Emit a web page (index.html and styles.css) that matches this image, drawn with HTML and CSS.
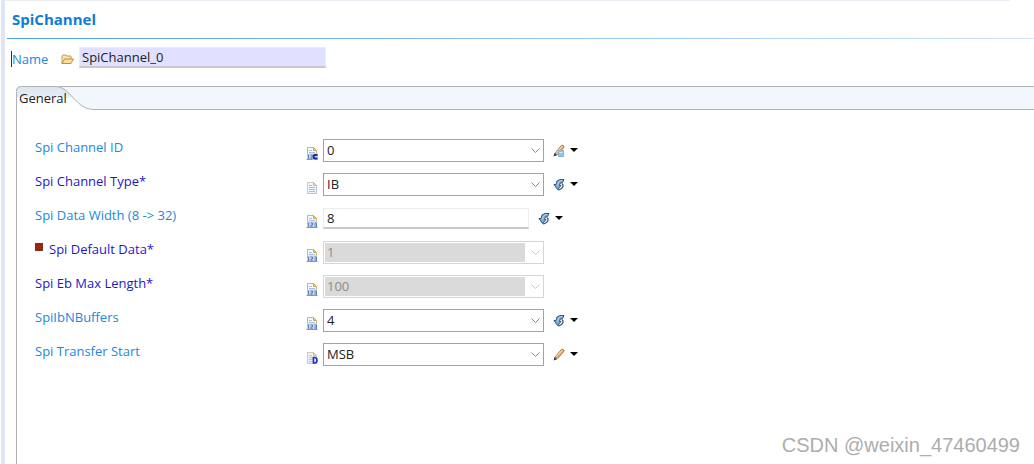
FILE: index.html
```html
<!DOCTYPE html>
<html lang="en">
<head>
<meta charset="utf-8">
<title>SpiChannel</title>
<link rel="stylesheet" href="styles.css">
</head>
<body>
<svg class="defs" aria-hidden="true">
  <defs>
    <symbol id="number" viewBox="0 0 12 13">
      <path d="M1.500.500h6l3 3v9h-9z" fill="#f4f8fd" stroke="#cdb679"/>
      <path d="M7.500.500v3h3z" fill="#f0d48a" stroke="#cba756"/>
      <path d="M3 3.500h3M3 5.500h6" stroke="#a9bfdf"/>
      <path d="M1 6.500h10V13H1z" fill="#c3d5ec"/>
      <path d="M1.500 8h1v4M4.500 8h2v2h-1.500v2h2M8.500 8h2v4h-2M8.500 10h2" fill="none" stroke="#5c80b5"/>
      <path d="M.5 12.500h11" stroke="#8196b8"/>
    </symbol>
    <symbol id="lines" viewBox="0 0 12 13">
      <path d="M1.500 1.500h6l3 3v8h-9z" fill="#eef4fc" stroke="#b9c4da"/>
      <path d="M1.500 12V1.500h6" fill="none" stroke="#d3cbae"/>
      <path d="M7.500 1.500v3h3z" fill="#f0dfb0" stroke="#d3bf8b"/>
      <path d="M3 4.500h3M3 6.500h6M3 8.500h6M3 10.500h6" stroke="#abc0e4"/>
    </symbol>
    <symbol id="reset" viewBox="0 0 12 13">
      <path d="M11 1.500H7Q3 2 3 6.500H1L4.500 11.500L8 7.500H6.500Q6.500 5 8.500 4.500H9.500z" fill="#7fa9d6" stroke="#2f557f" stroke-linejoin="round"/>
      <path d="M8.500 5.500Q10.500 6 10 8.500Q9 11 5 12" fill="none" stroke="#2f557f" stroke-width="1.200"/>
      <path d="M9 2.500H7.500Q4.500 3.500 4.500 7.500" fill="none" stroke="#bdd8f0"/>
    </symbol>
    <symbol id="pencil" viewBox="0 0 12 13">
      <path d="M1.500 11.500l1-3L8.500 1.500Q9.500.800 10.500 1.700T10.500 3.800L4.500 10.500z" fill="#f0b26e" stroke="#a56c3b" stroke-linejoin="round"/>
      <path d="M3.300 8.500L9 2.300" stroke="#ffe3b8"/>
      <path d="M.5 12.500L1.500 9l2.300 2.200z" fill="#2f3a66"/>
    </symbol>
    <symbol id="chevron" viewBox="0 0 9 5">
      <path d="M.500.500l4 4 4-4" fill="none" stroke="currentColor"/>
    </symbol>
    <symbol id="caret" viewBox="0 0 8 4"><path d="M0 0h8L4 4z" fill="#000"/></symbol>
  </defs>
</svg>
<main class="editor">
  <h1 class="title">SpiChannel</h1>
  <div class="name-row">
    <label class="name-label" for="name">Name</label>
    <svg class="folder" viewBox="0 0 13 11" aria-hidden="true">
      <path d="M1 9.500V2l1-1h3l1 1h4v3" fill="#f8e3a6" stroke="#c8a05a"/>
      <path d="M1 9.500L3.500 5h9L10 9.500z" fill="#fbdfa0" stroke="#c08d42" stroke-linejoin="round"/>
    </svg>
    <input class="name-input" id="name" type="text" value="SpiChannel_0">
  </div>
  <section class="tabs">
    <div class="tab-bar" role="tablist">
      <svg class="tab-shape" viewBox="0 0 80 24" aria-hidden="true">
        <defs><linearGradient id="tabfill" x2="0" y2="1"><stop stop-color="#dbe4ef"/><stop offset=".45" stop-color="#e6edf5"/><stop offset=".5" stop-color="#fff"/></linearGradient></defs>
        <path d="M0 24V5Q0 0 5 0H40C54 0 60 23 77 23H80V24z" fill="url(#tabfill)"/>
        <path d="M.5 24V5.500Q.5.500 5.500.500H40C54 .5 60 23.500 77 23.500h3" fill="none" stroke="#b0b3b6"/>
      </svg>
      <button class="tab" type="button" role="tab" aria-selected="true">General</button>
    </div>
    <form class="panel">
      <div class="row">
        <label class="label" for="id">Spi Channel ID</label>
        <svg class="kind" viewBox="0 0 12 13" aria-hidden="true"><use href="#number"/><path d="M6.500 6.500H12V13H6.500z" fill="#c3d5ec"/><path d="M11.500 8H9Q7.500 8 7.500 9.700T9 11.500h2.500" fill="none" stroke="#1d2a9b" stroke-width="2"/></svg>
        <div class="combo"><select class="select" id="id"><option>0</option></select><svg class="chevron"><use href="#chevron"/></svg></div>
        <button class="action" type="button" aria-label="Edit value"><svg class="action-icon" viewBox="0 0 12 13"><use href="#pencil"/><path d="M5.500 6.500h5v6h-5z" fill="#8dc5ea" stroke="#7fb2d6"/><path d="M6.500 8.500h3" stroke="#d9effc"/></svg><svg class="caret"><use href="#caret"/></svg></button>
      </div>
      <div class="row">
        <label class="label required" for="type">Spi Channel Type*</label>
        <svg class="kind" aria-hidden="true"><use href="#lines"/></svg>
        <div class="combo"><select class="select" id="type"><option>IB</option></select><svg class="chevron"><use href="#chevron"/></svg></div>
        <button class="action" type="button" aria-label="Reset value"><svg class="action-icon"><use href="#reset"/></svg><svg class="caret"><use href="#caret"/></svg></button>
      </div>
      <div class="row">
        <label class="label" for="width">Spi Data Width (8 -&gt; 32)</label>
        <svg class="kind" aria-hidden="true"><use href="#number"/></svg>
        <input class="text" id="width" type="text" value="8">
        <button class="action" type="button" aria-label="Reset value"><svg class="action-icon"><use href="#reset"/></svg><svg class="caret"><use href="#caret"/></svg></button>
      </div>
      <div class="row">
        <label class="label required" for="data"><span class="marker"></span>Spi Default Data*</label>
        <svg class="kind" aria-hidden="true"><use href="#number"/></svg>
        <div class="combo off"><select class="select" id="data" disabled><option>1</option></select><svg class="chevron"><use href="#chevron"/></svg></div>
      </div>
      <div class="row">
        <label class="label required" for="length">Spi Eb Max Length*</label>
        <svg class="kind" aria-hidden="true"><use href="#number"/></svg>
        <div class="combo off"><select class="select" id="length" disabled><option>100</option></select><svg class="chevron"><use href="#chevron"/></svg></div>
      </div>
      <div class="row">
        <label class="label" for="buffers">SpiIbNBuffers</label>
        <svg class="kind" aria-hidden="true"><use href="#number"/></svg>
        <div class="combo"><select class="select" id="buffers"><option>4</option></select><svg class="chevron"><use href="#chevron"/></svg></div>
        <button class="action" type="button" aria-label="Reset value"><svg class="action-icon"><use href="#reset"/></svg><svg class="caret"><use href="#caret"/></svg></button>
      </div>
      <div class="row">
        <label class="label" for="start">Spi Transfer Start</label>
        <svg class="kind" viewBox="0 0 12 13" aria-hidden="true"><use href="#lines"/><path d="M7.500 6.500h1q2.500 0 2.500 2.700T8.500 12h-1z" fill="#fff" stroke="#2530c8" stroke-width="1.700"/></svg>
        <div class="combo"><select class="select" id="start"><option>MSB</option></select><svg class="chevron"><use href="#chevron"/></svg></div>
        <button class="action" type="button" aria-label="Edit value"><svg class="action-icon"><use href="#pencil"/></svg><svg class="caret"><use href="#caret"/></svg></button>
      </div>
    </form>
  </section>
</main>
<div class="watermark">CSDN @weixin_47460499</div>
</body>
</html>
```
FILE: styles.css
```css
* { box-sizing: border-box; }
body {
  margin: 0;
  background: #fff;
  color: #222;
  font: 13px/18px "Open Sans", "Noto Sans", sans-serif;
}
button, input, select { font: inherit; color: inherit; }
.defs { position: absolute; width: 0; height: 0; }
.editor {
  display: flex;
  flex-direction: column;
  min-height: 100vh;
  margin-left: 1px;
  border-left: 4px solid #e0e4f5;
  background: linear-gradient(#ececf4, #ececf4) 0 0 / calc(100% - 24px) 1px no-repeat;
}
.title {
  margin: 0 0 0 2px;
  padding: 9px 5px 9px;
  border-bottom: 1px solid;
  border-image: linear-gradient(90deg, #4a9fe6, #d0e5fb) 1;
  color: #0f7bd8;
  font-size: 15px;
  line-height: 20px;
}
.name-row {
  display: flex;
  align-items: center;
  padding: 8px 6px 0;
}
.name-label {
  width: 50px;
  margin-top: 2px;
  border-left: 1px solid #333;
  color: #2088de;
  line-height: 16px;
}
.folder { width: 13px; height: 11px; margin: 4px 5px 0 0; }
.name-input {
  width: 247px;
  height: 21px;
  padding: 0 2px;
  border: 1px solid #ececf0;
  border-bottom: 2px solid #c9c9cd;
  background: #e1e0ff;
}
.tabs {
  display: flex;
  flex: 1;
  flex-direction: column;
  margin: 18px 0 0 11px;
}
.tab-bar {
  display: grid;
  height: 24px;
  border: solid #b0b3b6;
  border-width: 1px 0;
  border-top-left-radius: 6px;
  background: #f2f7fe;
}
.tab-shape { grid-area: 1 / 1; width: 80px; height: 24px; margin-top: -1px; }
.tab {
  grid-area: 1 / 1;
  justify-self: start;
  z-index: 1;
  height: 22px;
  padding: 0 3px;
  border: 0;
  background: none;
}
.panel {
  display: grid;
  flex: 1;
  align-content: start;
  grid-auto-rows: 34px;
  padding: 23px 0 0 18px;
  border-left: 1px solid #b0b3b6;
}
.row { display: flex; align-items: center; }
.label { width: 271px; padding-bottom: 6px; color: #2088de; }
.required { color: #1f17c4; }
.marker {
  display: inline-block;
  width: 8px;
  height: 8px;
  margin-right: 6px;
  border: 1px solid #6b3325;
  background: #a82208;
  vertical-align: 3px;
}
.kind { width: 12px; height: 13px; margin: 6px 5px 0 0; }
.combo {
  display: grid;
  width: 221px;
  height: 23px;
  padding: 1px;
  border: 1px solid #a3a3a3;
  color: #8a8a8a;
}
.select {
  grid-area: 1 / 1;
  width: 100%;
  padding: 0 2px;
  border: 0;
  appearance: none;
  background: none;
  color: #222;
}
.chevron { grid-area: 1 / 1; place-self: center end; width: 9px; height: 5px; margin-right: 2px; pointer-events: none; }
.off { border-color: #d5d5d5; color: #c8c8c8; }
.off .select {
  background: linear-gradient(#dadada, #dadada) 0 0 / calc(100% - 17px) 100% no-repeat;
  color: #8c8c8c;
  opacity: 1;
}
.text {
  width: 206px;
  height: 21px;
  padding: 0 3px;
  border: 1px solid #ececec;
  border-bottom: 2px solid #c9c9c9;
}
.action {
  display: flex;
  align-items: center;
  gap: 5px;
  margin-left: 9px;
  padding: 0;
  border: 0;
  background: none;
}
.action-icon { width: 12px; height: 13px; }
.caret { width: 8px; height: 4px; }
.watermark {
  position: absolute;
  right: 14px;
  bottom: 8px;
  color: #adadad;
  font: 20px/22px "Liberation Sans", Arial, sans-serif;
}
```
